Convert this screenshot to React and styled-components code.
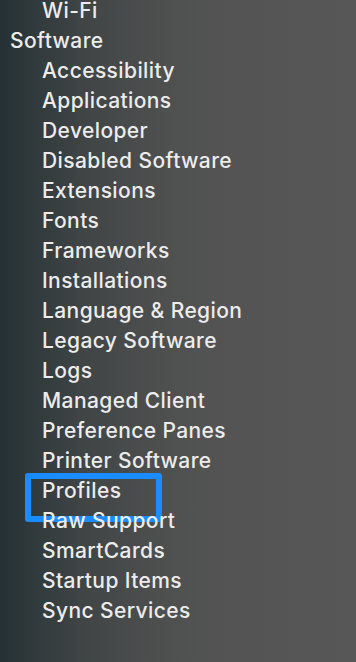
import React from 'react';
import styled, { createGlobalStyle } from 'styled-components';

const GlobalStyle = createGlobalStyle`
  html, body {
    margin: 0;
    padding: 0;
    height: 100%;
  }
  body {
    background: #555;
    font-family: Inter, "Noto Sans", sans-serif;
    -webkit-font-smoothing: antialiased;
  }
`;

const Sidebar = styled.div`
  width: 356px;
  height: 662px;
  overflow: hidden;
  background: linear-gradient(
    to right,
    #253134 0%,
    #2f393b 30px,
    #3f4445 80px,
    #4b4d4d 140px,
    #535353 210px,
    #575757 100%
  );
`;

const List = styled.ul`
  list-style: none;
  margin: -4px 0 0;
  padding: 0;
`;

const Row = styled.li`
  position: relative;
  height: 30px;
  line-height: 30px;
  padding-left: ${(p) => (p.$level === 0 ? 10 : 42)}px;
  color: #ececec;
  font-size: 21px;
  font-weight: 500;
  letter-spacing: 0.4px;
  white-space: nowrap;
`;

const Highlight = styled.span`
  position: absolute;
  left: 25px;
  top: -3px;
  width: 137px;
  height: 49px;
  box-sizing: border-box;
  border: 6px solid #1b8cff;
  border-radius: 3px;
  pointer-events: none;
`;

const items = [
  { label: 'Wi-Fi', level: 1 },
  { label: 'Software', level: 0 },
  { label: 'Accessibility', level: 1 },
  { label: 'Applications', level: 1 },
  { label: 'Developer', level: 1 },
  { label: 'Disabled Software', level: 1 },
  { label: 'Extensions', level: 1 },
  { label: 'Fonts', level: 1 },
  { label: 'Frameworks', level: 1 },
  { label: 'Installations', level: 1 },
  { label: 'Language & Region', level: 1 },
  { label: 'Legacy Software', level: 1 },
  { label: 'Logs', level: 1 },
  { label: 'Managed Client', level: 1 },
  { label: 'Preference Panes', level: 1 },
  { label: 'Printer Software', level: 1 },
  { label: 'Profiles', level: 1, selected: true },
  { label: 'Raw Support', level: 1 },
  { label: 'SmartCards', level: 1 },
  { label: 'Startup Items', level: 1 },
  { label: 'Sync Services', level: 1 },
];

export default function App() {
  return (
    <>
      <GlobalStyle />
      <Sidebar>
        <List>
          {items.map((item) => (
            <Row key={item.label} $level={item.level}>
              {item.label}
              {item.selected && <Highlight />}
            </Row>
          ))}
        </List>
      </Sidebar>
    </>
  );
}
